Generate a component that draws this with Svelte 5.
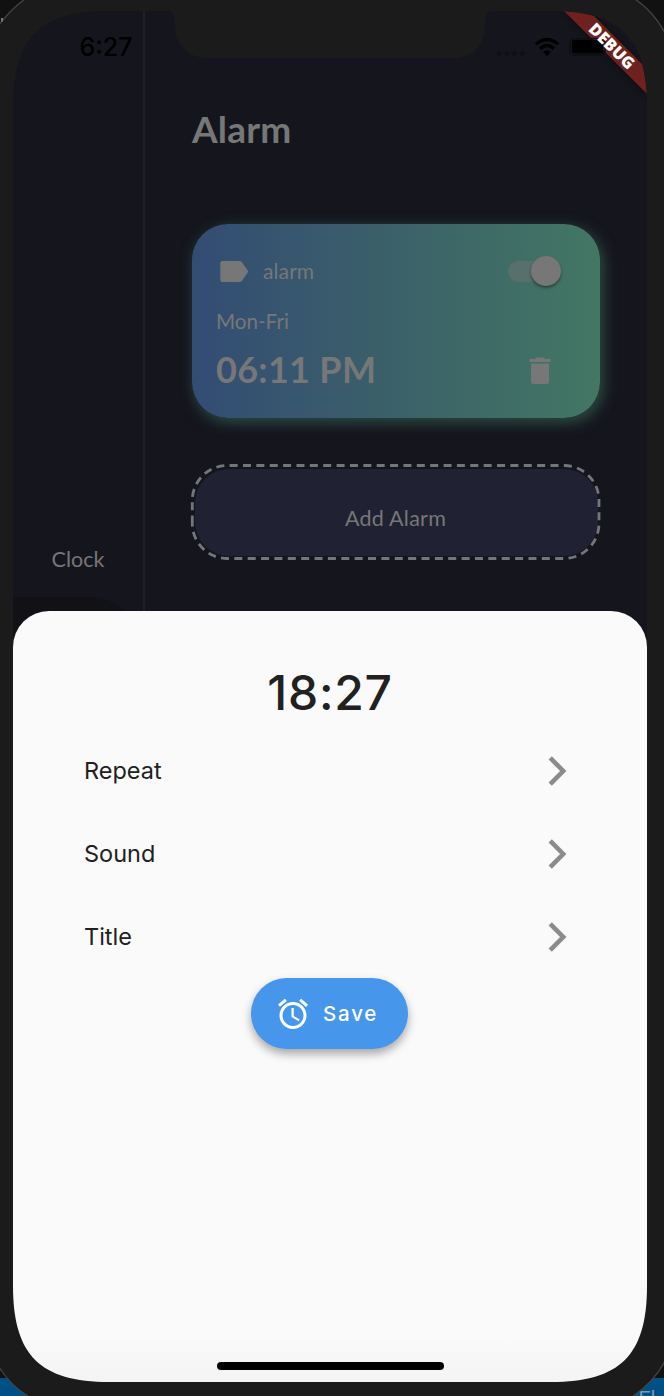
<script>
  const options = ['Repeat', 'Sound', 'Title'];
</script>

<div class="desktop">
  <svg class="device" viewBox="0 0 664 1396" aria-hidden="true">
    <rect width="664" height="1396" fill="#111" />
    <rect y="1378" width="664" height="18" fill="#005088" />
    <text x="638.500" y="1405" class="caption">Fl</text>
    <path d="M-1 25Q10 10 25 -1H635Q654 12 665 33V1361Q655 1381 632 1397H29Q10 1385 -1 1367Z" fill="#1b1b1b" stroke="#444447" stroke-width="1.3" />
    <path d="M1 21.500h2v-3.500H1z" fill="#777" />
  </svg>

  <div class="screen">
    <div class="app">
      <aside>
        <span class="clock">Clock</span>
        <div class="selected"></div>
      </aside>
      <main>
        <h1><span>Alarm</span></h1>
        <section class="card">
          <div class="row top">
            <svg class="label" width="29" height="22" viewBox="0 0 29 22"><path d="M2.5 0H19.5Q21 0 22 1.3L28.4 10.5 22 19.7Q21 21 19.5 21H2.5Q.3 21 .3 18.8V2.2Q.3 0 2.5 0Z" fill="#777" /></svg>
            <span class="name">alarm</span>
            <div class="switch"><div class="knob"></div></div>
          </div>
          <div class="days"><span>Mon-Fri</span></div>
          <div class="row bottom">
            <strong>06:11 PM</strong>
            <svg class="bin" width="22" height="28" viewBox="0 0 22 28"><path d="M.5 2H6L7.5.5h7L16 2h5.500v3H.5ZM2 6.500H20V24.200Q20 27 17.200 27H4.800Q2 27 2 24.200Z" fill="#777" /></svg>
          </div>
        </section>
        <div class="add">
          <svg class="dashes" width="412" height="98" viewBox="0 0 412 98"><path d="M2.300 60.500V37A35 35 0 0 1 37.300 2.500H374A35 35 0 0 1 409 37.500V60.500A35 35 0 0 1 374 95.500H37.300A35 35 0 0 1 2.300 60.500Z" fill="none" stroke="#75757c" stroke-width="2.800" stroke-dasharray="8 5.370" /></svg>
          <span>Add Alarm</span>
        </div>
      </main>
    </div>

    <div class="notch"><svg width="325" height="48" viewBox="0 0 325 48"><path d="M0 0Q7 1 7 10V14C8 35 21 47.300 41 47.300H284C304 47.300 317 35 317 14V10Q317 1 325 0Z" fill="#1b1b1b" /></svg></div>

    <svg class="ribbon" width="100" height="100" viewBox="0 0 100 100">
      <defs><filter id="soft" x="-20%" y="-20%" width="140%" height="140%"><feGaussianBlur stdDeviation="3" /></filter></defs>
      <path d="M17 0H42L100 58V83Z" transform="translate(0 1)" fill="#000" opacity=".55" filter="url(#soft)" />
      <path d="M17 0H42L100 58V83Z" fill="#6f211f" />
    </svg>

    <span class="time">6:27</span>
    <svg class="status" width="112" height="22" viewBox="0 0 112 22">
      <g fill="#101017"><circle cx="5" cy="15.500" r="2.300" /><circle cx="12.700" cy="15.500" r="2.300" /><circle cx="20.500" cy="15.500" r="2.300" /><circle cx="28.500" cy="15.500" r="2.300" /></g>
      <g fill="none" stroke="#000" stroke-width="3.400"><path d="M42 6.300Q53 -3.300 64 6.300" /><path d="M46 10.600Q53 4.600 60 10.600" /></g>
      <path d="M49 13.800Q53 10.700 57 13.800L53 18Z" fill="#000" />
      <rect x="76" y=".750" width="35" height="16.250" rx="4" fill="none" stroke="#0d0d13" stroke-width="1.500" />
      <rect x="78" y="2" width="31.500" height="13.300" rx="2" fill="#000" />
    </svg>
    <span class="debug">DEBUG</span>

    <div class="sheet">
      <div class="picked"><span>18:27</span></div>
      {#each options as option}
        <div class="option">
          <span>{option}</span>
          <svg width="20" height="30" viewBox="0 0 20 30"><path d="M2.200 1.800 15.200 15 2.200 28.200" fill="none" stroke="#8b8b8b" stroke-width="4.600" /></svg>
        </div>
      {/each}
      <button>
        <svg width="36" height="36" viewBox="0 0 24 24" fill="#fff"><path d="M22 5.720l-4.600-3.860-1.290 1.530 4.600 3.860L22 5.720zM7.880 3.390L6.600 1.860 2 5.710l1.290 1.530 4.590-3.850zM12.500 8H11v6l4.750 2.850.750-1.230-4-2.370V8zM12 4c-4.970 0-9 4.030-9 9s4.020 9 9 9c4.970 0 9-4.030 9-9s-4.030-9-9-9zm0 16c-3.870 0-7-3.130-7-7s3.130-7 7-7 7 3.130 7 7-3.130 7-7 7z" /></svg>
        <span>Save</span>
      </button>
      <div class="home"></div>
    </div>
  </div>
</div>

<style>
  :global(body) { margin: 0; background: #111; }
  .desktop { position: relative; width: 664px; height: 1396px; overflow: hidden; box-sizing: border-box; padding: 11px 17px 14px 13px; font-family: Lato, sans-serif; }
  .device { position: absolute; inset: 0; width: 664px; height: 1396px; }
  .caption { font: 20px "Liberation Sans", sans-serif; fill: #8098a8; }
  .screen { position: relative; width: 634px; height: 1371px; background: #15151e; clip-path: path("M0 96C0 27 27 0 96 0H538C607 0 634 27 634 96V1275C634 1344 607 1371 538 1371H96C27 1371 0 1344 0 1275Z"); }
  .app { display: flex; height: 640px; color: #777; }
  aside { width: 130px; border-right: 2px solid #202024; display: flex; flex-direction: column; justify-content: flex-end; }
  .clock { align-self: center; font-size: 21.500px; line-height: 26px; margin-bottom: 25px; }
  .selected { height: 54px; width: 130px; background: #121116; border-radius: 0 54px 0 0; }
  main { flex: 1; padding: 96px 47px 0; }
  h1 { margin: 0; height: 117px; font-size: 37px; line-height: 43px; font-weight: 700; letter-spacing: .2px; }
  .card { width: 408px; height: 194px; box-sizing: border-box; padding: 32px 39px 0 24px; border-radius: 36px; background: linear-gradient(90deg, #334c74, #3b6169 50%, #437763); box-shadow: 3px 4px 14px 1px #2b4b41; }
  .row { display: flex; align-items: center; }
  .top { height: 31px; }
  .label { margin-left: 4px; margin-right: 14px; }
  .name { font-size: 21px; letter-spacing: .1px; position: relative; top: -1px; }
  .switch { margin-left: auto; width: 53px; height: 21px; border-radius: 11px; background: #586f6b; position: relative; }
  .knob { position: absolute; right: 0; top: -5px; width: 30px; height: 30px; border-radius: 50%; background: #777; box-shadow: 0 2px 3px #0006; }
  .days { font-size: 20.600px; line-height: 26px; margin-top: 21px; }
  .bottom { height: 48px; margin-top: 12px; justify-content: space-between; }
  strong { font-size: 36px; letter-spacing: .3px; white-space: nowrap; position: relative; top: -1px; }
  .bin { margin-right: 10px; position: relative; top: 1px; }
  .add { position: relative; margin: 51px 2px 0 3px; height: 87px; border-radius: 34px; background: #202233; display: flex; align-items: center; justify-content: center; font-size: 21.500px; letter-spacing: .25px; }
  .add span { position: relative; left: -1px; top: 5px; }
  .dashes { position: absolute; left: -5px; top: -6px; }
  .notch { position: absolute; left: 155px; top: 0; }
  .ribbon { position: absolute; right: 0; top: 0; }
  .time { position: absolute; left: 66.500px; top: 20px; font: 500 25px/32px Inter, sans-serif; color: #000; }
  .status { position: absolute; left: 481px; top: 27px; }
  .debug { position: absolute; left: 568.500px; top: 24.500px; width: 60px; line-height: 20px; text-align: center; font-family: "Open Sans", sans-serif; font-size: 16.500px; font-weight: 800; color: #fff; transform: rotate(45deg); }
  .sheet { position: absolute; left: 0; right: 0; bottom: 0; height: 771px; box-sizing: border-box; border-radius: 36px 36px 0 0; background: linear-gradient(#fafafa 94%, #f4f4f4); display: flex; flex-direction: column; align-items: center; font-family: Inter, sans-serif; color: #212121; }
  .picked { margin-top: 52px; height: 66px; font-size: 48px; line-height: 60px; font-weight: 450; letter-spacing: .8px; }
  .option { width: 484px; height: 83px; margin-right: 8px; display: flex; align-items: center; justify-content: space-between; font-size: 23.500px; flex: none; }
  button { width: 157px; height: 71px; margin-right: 1px; border: 0; border-radius: 36px; background: #4696ec; box-shadow: 0 5px 10px #0005; display: flex; align-items: center; padding: 0 0 0 24px; gap: 12px; color: #fff; font: 500 20.500px Inter, sans-serif; letter-spacing: 1.800px; }
  .home { margin-top: auto; margin-bottom: 12px; width: 227px; height: 8px; border-radius: 4px; background: #000; }
</style>
